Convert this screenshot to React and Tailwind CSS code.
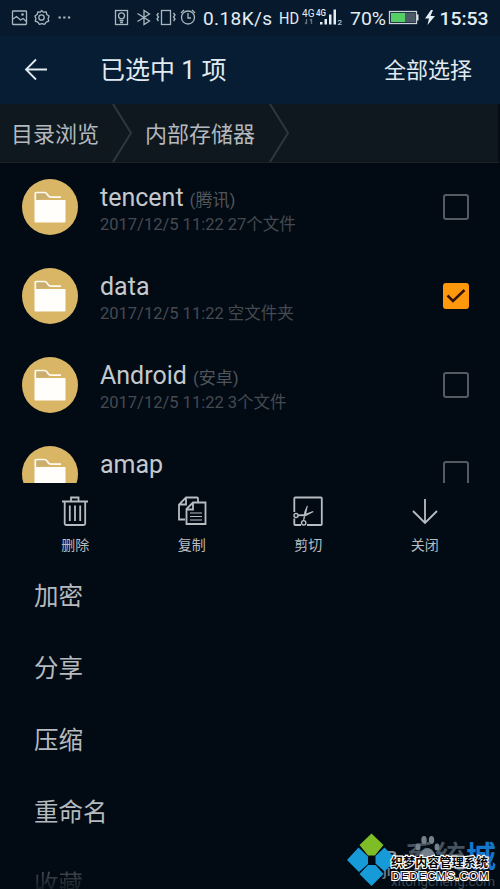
const clockHands = "M188 13v5h3";

function StatusBar() {
  return (
    <div className="relative h-9 bg-[#071a2d] text-[#e3edf3]">
      <svg className="block" width="500" height="36" viewBox="0 0 500 36" fill="none" stroke="#a9b7c0" strokeWidth="1.300">
        <rect x="12.5" y="11" width="14" height="13.500" rx="0.8" />
        <path d="M13 19l3.500-2.500 4 3.500 2.500-1.500 3.500 3" />
        <circle cx="22.500" cy="14.500" r="0.700" />
        <circle cx="41.500" cy="17.500" r="2.700" />
        <path strokeLinejoin="round" d="M41.500 10.500l2 1.700 2.700-.3.600 2.600 2.300 1.500-1 2.500.6 2.700-2.500 1-1.600 2.200-2.600-.7-2.600.7-1.600-2.200-2.600-1 .7-2.700-1-2.500 2.300-1.500.6-2.600 2.600.3z" />
        <path strokeWidth="1.800" d="M58.500 17.500h2.300M63.200 17.500h2.300M67.900 17.500h2.300" />
        <rect x="115.500" y="10.500" width="12" height="14" />
        <circle cx="121.500" cy="15.800" r="3" />
        <path d="M119.500 20.500h4M120 22.500h3" />
        <path d="M137.500 13.500l12 7.500-5.500 3.500V10.500l5.500 3.500-12 7.500" />
        <rect x="161.500" y="10.500" width="9" height="14" />
        <path d="M158.500 13l-1.500 2 1.500 2-1.500 2 1.500 2M173.500 13l1.500 2-1.500 2 1.500 2-1.500 2" />
        <circle cx="188" cy="17.500" r="6.500" />
        <path d={clockHands} />
        <path d="M181 13l3-3M195 13l-3-3" />
        <g stroke="none" fill="#e3edf3">
          <path d="M320 22h2.500v2.500H320zM324.500 19h2.500v5.500h-2.500zM329 14.500h2.500v10H329zM333.500 9.500h2.500v15h-2.500z" />
          <path d="M431 10l-6 8.500h4l-1.500 6.500 7.500-9h-4.500l2.500-6z" />
        </g>
        <path stroke="#63717b" d="M306.500 19v5M305 22.500l1.500 1.500M311.500 24v-5M310 20.500l1.500-1.500" />
        <rect x="389.500" y="11.500" width="27" height="12" stroke="#c8d2d7" />
        <rect x="391" y="13" width="14.500" height="9" fill="#55cf65" stroke="none" />
        <rect x="405.500" y="13" width="10" height="9" fill="#4c5966" stroke="none" />
        <rect x="417" y="14.500" width="1.500" height="6" fill="#dce5e9" stroke="none" />
        <g stroke="none" fill="#e3edf3" fontFamily="Roboto, sans-serif">
          <text x="203" y="25" fontSize="19" textLength="69">0.18K/s</text>
          <text x="279" y="23.500" fontSize="16.500" textLength="20" lengthAdjust="spacingAndGlyphs">HD</text>
          <text x="302" y="16.500" fontSize="10" textLength="12.500" lengthAdjust="spacingAndGlyphs">4G</text>
          <text x="316" y="15.500" fontSize="8.500" textLength="10" lengthAdjust="spacingAndGlyphs" fontWeight="500">4G</text>
          <text x="337.500" y="24.500" fontSize="8">2</text>
          <text x="350" y="25" fontSize="19" textLength="36" lengthAdjust="spacingAndGlyphs">70%</text>
          <text x="439.500" y="25" fontSize="19" fontWeight="500" textLength="49" lengthAdjust="spacingAndGlyphs">15:53</text>
        </g>
      </svg>
    </div>
  );
}

function FolderIcon() {
  return (
    <div className="mb-px flex size-14 shrink-0 items-center justify-center rounded-full bg-[#d9b566]">
      <svg width="34" height="34" viewBox="0 0 34 34">
        <path d="M2.300 10V3.500Q2.300 2.500 3.500 2.500H11.500q1.500 0 2.500 1.500l1 1.500q1 1.700 3 1.700H28" fill="#c9ae70" stroke="#fffaf0" strokeWidth="1.700" />
        <path d="M1.500 10h31v21.500q0 1-1 1h-29q-1 0-1-1z" fill="#fffefa" />
      </svg>
    </div>
  );
}

function Checkbox({ checked }) {
  if (checked) {
    return (
      <div className="mb-0.5 mr-[31px] size-[26px] rounded-[3px] bg-[#ff980d]">
        <svg width="26" height="26" viewBox="0 0 26 26" fill="none" stroke="#34130a" strokeWidth="2.500">
          <path d="M4.500 12.500l5.500 5.500L21.500 7" />
        </svg>
      </div>
    );
  }
  return <div className="mb-0.5 mr-[31px] size-[26px] rounded-[3px] border-2 border-[#565b62]" />;
}

function FileRow({ name, alias, detail, checked }) {
  return (
    <div className="flex h-[89px] shrink-0 items-center pl-[22px]">
      <FolderIcon />
      <div className="ml-[22px] flex-1 whitespace-nowrap pt-[5px]">
        <div className="h-7 text-[25px] leading-7 text-[#c4c9cd]">
          {name}
          {alias && <span className="ml-1.5 text-[17px] text-[#50555b]">{alias}</span>}
        </div>
        <div className="h-[25px] text-[16.5px] leading-[25px] text-[#454a51]">{detail}</div>
      </div>
      <Checkbox checked={checked} />
    </div>
  );
}

const files = [
  { name: "tencent", alias: "(腾讯)", detail: "2017/12/5 11:22 27个文件" },
  { name: "data", detail: "2017/12/5 11:22 空文件夹", checked: true },
  { name: "Android", alias: "(安卓)", detail: "2017/12/5 11:22 3个文件" },
  { name: "amap", detail: "" },
];

const actions = [
  {
    label: "删除",
    icon: <path d="M3 6.500h26M12 6V2.500h7.500V6M5.700 7v21.500q0 1.500 1.500 1.500h17.500q1.500 0 1.500-1.500V7M10.800 10.500v15.500M16 10.500v15.500M21.200 10.500v15.500" />,
  },
  {
    label: "复制",
    icon: (
      <>
        <path d="M9 24.500H3V9.500l7-7h11q1 0 1 1V7M10 3v6.500H3" />
        <path d="M10.500 14l6.500-6.500h12.500v21.500h-19zM17 8v6.500h-6" />
        <path strokeWidth="1.200" d="M14 18h12M14 21.500h12M14 25h12" />
      </>
    ),
  },
  {
    label: "剪切",
    icon: (
      <>
        <path d="M2.300 17V3.500q0-1 1-1h25.500q1 0 1 1v25.500q0 1-1 1H15M9 30H3.300q-1 0-1-1v-5.500" />
        <path fill="currentColor" stroke="none" d="M11 25.500l1.300-8.500L15 10.500l.8.500-1.800 8.500-2 6zM6 19.500l7-.500 8-3 .5 1-7.500 4-8 .3z" />
        <circle cx="4" cy="20.500" r="2" strokeWidth="1.400" />
        <circle cx="11.700" cy="27.800" r="2.200" strokeWidth="1.400" />
      </>
    ),
  },
  { label: "关闭", icon: <path d="M16 4v24M4 16l12 12 12-12" /> },
];

function Watermark() {
  return (
    <svg className="absolute bottom-0 right-0" width="158" height="60" viewBox="342 829 158 60">
      <g fontFamily="'Noto Sans CJK SC', sans-serif" fontWeight="500">
        <text x="404" y="868" fontSize="31" fill="#46525e" textLength="62">系统</text>
        <text x="466" y="867" fontSize="30" fill="#1477ca" fontWeight="700">城</text>
        <text x="386" y="864" fontFamily="Roboto, sans-serif" fontSize="18" fill="#89939c">B</text>
        <text x="383" y="876" fontFamily="Roboto, sans-serif" fontSize="15" fill="#6c7884">ji</text>
      </g>
      <g fill="#74808b">
        <ellipse cx="424" cy="840" rx="2.700" ry="4" />
        <ellipse cx="431.500" cy="840" rx="2.700" ry="4" />
        <ellipse cx="418" cy="847" rx="2.500" ry="3.500" />
        <ellipse cx="437" cy="847" rx="2.500" ry="3.500" />
        <path d="M420 854q8-12 15 0v5h-15z" />
      </g>
      <text x="391" y="886" fontFamily="Roboto, sans-serif" fontSize="13.500" fill="#3c4752" textLength="104">xitongcheng.com</text>
      <path fill="#7fbd26" d="M371.500 833.500l12 11.500-8.500 10.500h-7l-8.500-10.500z" />
      <path fill="#169bd8" d="M358.500 847.500l9.500 9v7.500l-9 8-12-12zM384.500 847.500l12 12-12 12-9-8v-7.500zM368 865h7.500l8 9-12 12-12-12z" />
      <g fill="#050505" stroke="#fff" strokeWidth="2.200" paintOrder="stroke">
        <text x="391" y="867" fontFamily="'Noto Sans CJK SC', sans-serif" fontWeight="700" fontSize="12" textLength="97">织梦内容管理系统</text>
        <text x="391.500" y="879.500" fontFamily="'Liberation Sans', sans-serif" fontSize="11.500" textLength="97">DEDECMS.COM</text>
      </g>
    </svg>
  );
}

export default function App() {
  return (
    <main className="relative flex h-[889px] w-[500px] flex-col overflow-hidden bg-[#020b14] font-[Roboto,'Noto_Sans_CJK_SC',sans-serif]">
      <StatusBar />
      <header className="flex h-[68px] shrink-0 items-center bg-[#071d33] text-[#e1eaf0]">
        <svg className="ml-6" width="24" height="24" viewBox="0 0 24 24" fill="none" stroke="currentColor" strokeWidth="1.800">
          <path d="M12 1.500L2 11.500l10 10M2 11.500h21" />
        </svg>
        <h1 className="ml-[52px] flex-1 pt-0.5 text-[25px] font-normal">已选中 1 项</h1>
        <button className="mr-7 text-[22px]">全部选择</button>
      </header>
      <nav className="flex h-[59px] shrink-0 items-center border-b border-r-2 border-b-[#1c2228] border-r-[#060d14] bg-[#10181f] text-[22px] text-[#b3b9be]">
        <span className="ml-[11px] w-[101px] pt-0.5">目录浏览</span>
        <svg width="20" height="58" viewBox="0 0 20 58" fill="none" stroke="#2f373e" strokeWidth="2"><path d="M1 0l18 29L1 58" /></svg>
        <span className="ml-[13px] w-[124px] pt-0.5">内部存储器</span>
        <svg width="20" height="58" viewBox="0 0 20 58" fill="none" stroke="#2f373e" strokeWidth="2"><path d="M1 0l18 29L1 58" /></svg>
      </nav>
      <section className="flex h-80 shrink-0 flex-col overflow-hidden">
        {files.map((file) => <FileRow key={file.name} {...file} />)}
      </section>
      <section className="grid h-[78px] shrink-0 grid-cols-4 px-[17px] pt-3">
        {actions.map(({ label, icon }) => (
          <div key={label} className="flex flex-col items-center text-[#b8bdc2]">
            <svg width="32" height="32" viewBox="0 0 32 32" fill="none" stroke="currentColor" strokeWidth="1.800">{icon}</svg>
            <span className="mt-2 text-sm leading-5">{label}</span>
          </div>
        ))}
      </section>
      <section className="flex flex-col">
        {["加密", "分享", "压缩", "重命名"].map((label) => (
          <div key={label} className="flex h-[72px] shrink-0 items-center pl-[34px] text-[24.5px] text-[#b5babf]">{label}</div>
        ))}
        <div className="flex h-[72px] shrink-0 items-center bg-gradient-to-b from-[#50555a] from-25% to-[#0d161e] to-60% bg-clip-text pl-[34px] text-[24.5px] text-transparent">收藏</div>
      </section>
      <Watermark />
    </main>
  );
}
